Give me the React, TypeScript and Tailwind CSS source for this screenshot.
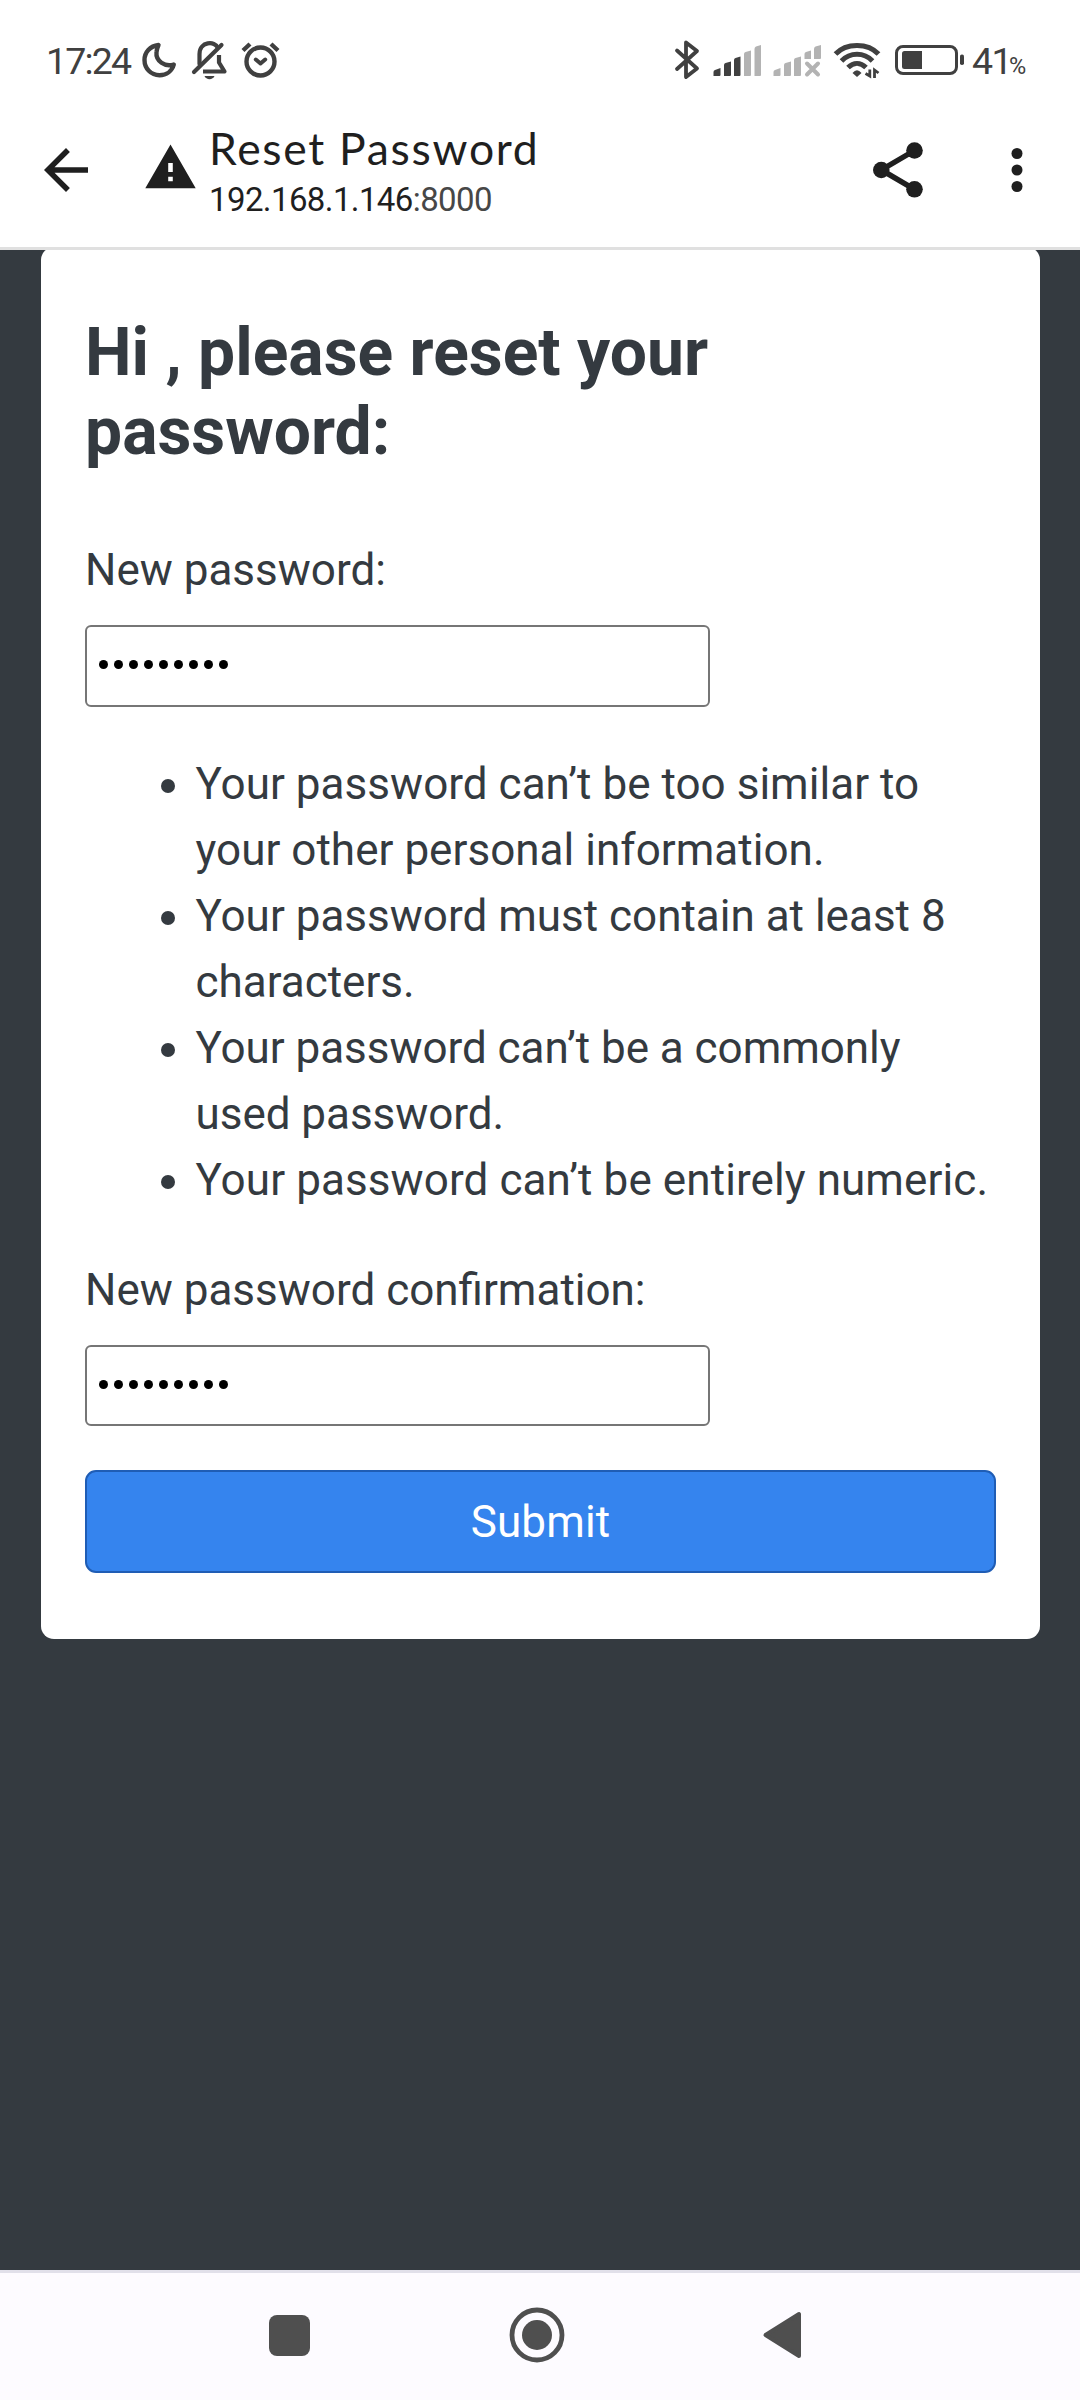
import React from "react";

const rules = [
  { lines: ["Your password can’t be too similar to", "your other personal information."], tracking: "tracking-[0.03px]" },
  { lines: ["Your password must contain at least 8", "characters."], tracking: "tracking-normal" },
  { lines: ["Your password can’t be a commonly", "used password."], tracking: "tracking-[-0.04px]" },
  { lines: ["Your password can’t be entirely numeric."], tracking: "tracking-[0.09px]" },
];

function StatusBar() {
  return (
    <div className="flex h-[110px] shrink-0 items-start pt-[38px] text-[#404040]">
      <span className="ml-[46px] mt-px w-[95px] whitespace-nowrap font-['Roboto',sans-serif] text-[37.5px] leading-[44px] tracking-[-1.8px]">17:24</span>
      {/* do not disturb */}
      <svg className="h-[44px] w-[38px]" viewBox="141 38 38 44" fill="none" stroke="currentColor" strokeWidth="4.4" strokeLinejoin="round">
        <path d="M158.5 45C150 46 144.500 52.500 144.500 60C144.500 68.500 151 75.300 159.500 75.300C166.500 75.300 172 71 173.800 64.500C165 67.500 155.500 61 156.500 52C156.700 49.500 157.500 47.200 158.500 45Z" />
      </svg>
      {/* muted bell */}
      <svg className="ml-[10px] h-[44px] w-[42px]" viewBox="189 38 42 44" fill="none" stroke="currentColor" strokeWidth="4.2" strokeLinecap="round" strokeLinejoin="round">
        <path d="M199.500 64V54C199.500 41 215.500 41 217.500 47.500" />
        <path d="M219 55V62.500L224.500 71.500H203" strokeLinecap="butt" />
        <path d="M194 72L221.500 45" />
        <path d="M204.500 76H214.500C213 80.200 206 80.200 204.500 76Z" fill="currentColor" stroke="none" />
      </svg>
      {/* alarm */}
      <svg className="ml-[8px] h-[44px] w-[44px]" viewBox="239 38 44 44" fill="none" stroke="currentColor" strokeWidth="4.4" strokeLinecap="round" strokeLinejoin="round">
        <circle cx="260.500" cy="61.500" r="14" />
        <path d="M243 50.500L250 44M271 44L278 50.500" strokeLinecap="butt" />
        <path d="M255.800 59.500L260.500 63.500L265.200 59.500" strokeWidth="4" />
      </svg>
      <div className="flex-1" />
      {/* bluetooth */}
      <svg className="h-[44px] w-[30px]" viewBox="672 38 30 44" fill="none" stroke="currentColor" strokeWidth="3.800" strokeLinecap="round" strokeLinejoin="round">
        <path d="M677 50.500L697 68.500L686 77V42.500L697 51L677 69" />
      </svg>
      {/* signal, first SIM */}
      <svg className="ml-[9px] h-[44px] w-[52px]" viewBox="711 38 52 44" fill="currentColor">
        <path d="M713.500 76V72Q713.500 70.500 715 70L720.500 68V75Q720.500 76 719.500 76Z" />
        <path d="M724 76V65Q724 63.500 725.500 63L731 61.500V75Q731 76 730 76Z" />
        <path d="M734 76V60Q734 58.500 735.500 58L740.500 56.500V75Q740.500 76 739.500 76Z" />
        <path fill="#b3b3b3" d="M744 76V54Q744 52.500 745.500 52L751 50.500V75Q751 76 750 76Z" />
        <path fill="#b3b3b3" d="M754.500 76V49Q754.500 47 756 46.500L761 45V75Q761 76 760 76Z" />
      </svg>
      {/* signal, second SIM */}
      <svg className="ml-[8px] h-[44px] w-[52px] text-[#b3b3b3]" viewBox="771 38 52 44" fill="currentColor">
        <path d="M773.500 76V72Q773.500 70.500 775 70L780.500 68V75Q780.500 76 779.500 76Z" />
        <path d="M784 76V65Q784 63.500 785.500 63L791 61.500V75Q791 76 790 76Z" />
        <path d="M794 76V60Q794 58.500 795.500 58L801 56.500V75Q801 76 800 76Z" />
        <path d="M804.500 59V54Q804.500 52.500 806 52L811 50.500V59Z" />
        <path d="M814 59V49Q814 47 815.500 46.500L821 45V58Q821 59 820 59Z" />
        <path d="M807 63.500L818 74.500M818 63.500L807 74.500" stroke="currentColor" strokeWidth="4" strokeLinecap="round" />
      </svg>
      {/* wifi */}
      <svg className="ml-[9px] h-[44px] w-[50px]" viewBox="832 38 50 44" fill="none" stroke="currentColor" strokeWidth="5">
        <path d="M835.500 54C846 42.500 868 42.500 878.500 54" />
        <path d="M841.500 61C850 52 864 52 872.500 61" />
        <path d="M848 67.500C853.500 62 860.500 62 866 67.500" />
        <path d="M852.500 73Q857 67.500 861.500 73L857 77Z" fill="currentColor" stroke="none" />
        <path d="M865.500 73.500L869.800 76V69.500M878.500 73L874.500 70V78" strokeWidth="2.800" />
      </svg>
      {/* battery */}
      <svg className="ml-[12px] h-[44px] w-[72px]" viewBox="894 38 72 44" fill="currentColor">
        <rect x="896.500" y="46.500" width="60" height="27" rx="6.500" fill="none" stroke="currentColor" strokeWidth="3" />
        <path d="M904.500 51H922V69H904.500Q902 69 902 66.500V53.500Q902 51 904.500 51Z" />
        <rect x="960" y="54.500" width="4" height="10.500" rx="1.800" />
      </svg>
      <div className="ml-[6px] mt-px flex w-[108px] items-baseline font-['Roboto',sans-serif] leading-[44px]">
        <span className="w-[37px] text-[37.5px] tracking-[-1.5px]">41</span>
        <span className="text-[23.5px]">%</span>
      </div>
    </div>
  );
}

function BrowserBar() {
  return (
    <header className="flex h-[140px] shrink-0 items-start border-b-[3px] border-[#e0e0e0] text-[#1f1f1f]">
      <svg className="ml-[33px] mt-[27px] size-[66px]" viewBox="0 0 24 24" fill="currentColor">
        <path d="M20 11H7.830l5.590-5.590L12 4l-8 8 8 8 1.410-1.410L7.830 13H20z" />
      </svg>
      <svg className="ml-[44px] mt-[30px] size-[55px]" viewBox="0 0 24 24" fill="currentColor">
        <path d="M1 21h22L12 2zm12-3h-2v-2h2zm0-4h-2v-4h2z" />
      </svg>
      <div className="ml-[11px] w-[656px] whitespace-nowrap">
        <div className="mt-[10px] font-['Lato',sans-serif] text-[44.5px] leading-[56px] tracking-[1.7px]">Reset Password</div>
        <div className="mt-[4px] font-['Roboto',sans-serif] text-[33px] leading-[40px] tracking-[-0.6px]">
          192.168.1.146<span className="text-[#474747]">:8000</span>
        </div>
      </div>
      <svg className="mt-[27px] size-[66px]" viewBox="865 137 66 66" fill="currentColor">
        <path d="M914.500 150.500L881.300 170L914.500 189.300" fill="none" stroke="currentColor" strokeWidth="5.500" />
        <circle cx="914.500" cy="150.500" r="8.300" />
        <circle cx="881.300" cy="170" r="8.300" />
        <circle cx="914.500" cy="189.300" r="8.300" />
      </svg>
      <svg className="ml-[53px] mt-[27px] size-[66px]" viewBox="984 137 66 66" fill="currentColor">
        <circle cx="1017" cy="153.500" r="5.500" />
        <circle cx="1017" cy="170" r="5.500" />
        <circle cx="1017" cy="186.500" r="5.500" />
      </svg>
    </header>
  );
}

function PasswordField({ className }: { className: string }) {
  return (
    <div className={`flex w-[625px] items-center gap-[6px] rounded-[6px] border-2 border-[#767676] bg-white pl-[12px] pb-[3px] ${className}`}>
      {Array.from({ length: 9 }, (_, i) => (
        <span key={i} className="size-[9px] rounded-full bg-black" />
      ))}
    </div>
  );
}

export default function App() {
  return (
    <div className="flex h-[2400px] w-[1080px] flex-col overflow-hidden bg-white">
      <StatusBar />
      <BrowserBar />
      <main className="flex-1 bg-[#343a40] px-[41px] font-['Roboto',sans-serif] text-[44px] leading-[66px] text-[#343a40]">
        <section className="h-[1389px] w-[999px] overflow-hidden">
          <div className="-mt-[3px] h-[1392px] rounded-[13px] bg-white px-[44px] pt-[66px]">
            <h1 className="text-[66px] font-bold leading-[79px]">
              Hi , please reset your
              <br />
              password:
            </h1>
            <p className="mt-[66px]">New password:</p>
            <PasswordField className="mt-[22px] h-[82px]" />
            <ul className="mt-[44px] pl-[110px]">
              {rules.map(({ lines, tracking }) => (
                <li key={lines[0]} className="-ml-[34px] flex items-start whitespace-nowrap">
                  <span className="mt-[28px] mr-[20.500px] size-[14px] shrink-0 rounded-full bg-[#343a40]" />
                  <span className={tracking}>
                    {lines.map((line) => (
                      <span key={line} className="block">{line}</span>
                    ))}
                  </span>
                </li>
              ))}
            </ul>
            <p className="mt-[44px]">New password confirmation:</p>
            <PasswordField className="mt-[22px] h-[81px]" />
            <button className="mt-[44px] block h-[103px] w-[911px] rounded-[11px] border-2 border-[#1f5db5] bg-[#3584ee] pt-px tracking-[0.15px] text-white">
              Submit
            </button>
          </div>
        </section>
      </main>
      <nav className="flex h-[130px] shrink-0 border-t-[3px] border-[#e1e0ea] bg-[#fdfbff] text-[#4f4f4f]">
        <span className="ml-[269px] mt-[42px] size-[41px] rounded-[8px] bg-[#4f4f4f]" />
        <svg className="ml-[197px] mt-[32px] size-[60px]" viewBox="507 2305 60 60" fill="currentColor">
          <circle cx="537" cy="2335" r="25" fill="none" stroke="currentColor" strokeWidth="4.800" />
          <circle cx="537" cy="2335" r="15" />
        </svg>
        <svg className="ml-[193px] mt-[32px] h-[60px] w-[44px]" viewBox="760 2305 44 60" fill="currentColor" stroke="currentColor" strokeWidth="4" strokeLinejoin="round">
          <path d="M765.500 2335L799 2314V2356Z" />
        </svg>
      </nav>
    </div>
  );
}
